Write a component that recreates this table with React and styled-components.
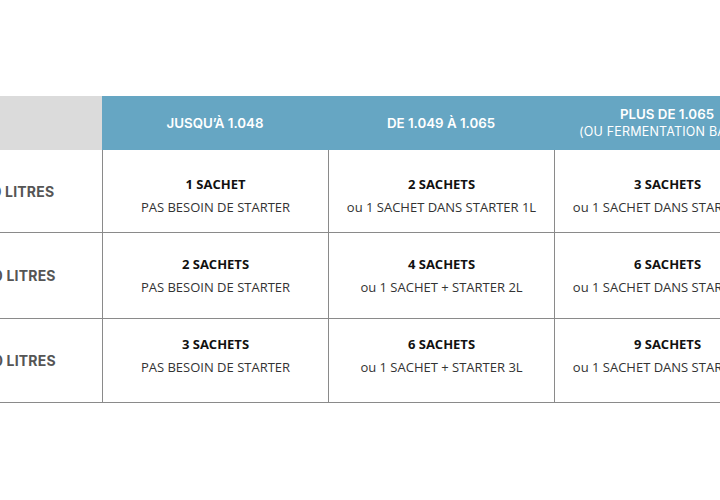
import React from "react";
import styled, { createGlobalStyle } from "styled-components";

const Global = createGlobalStyle`
  html, body { margin: 0; padding: 0; background: #fff; overflow: hidden; }
  body { width: 720px; height: 500px; }
`;

const Page = styled.div`
  width: 720px;
  height: 500px;
  overflow: hidden;
  padding-top: 96px;
  box-sizing: border-box;
`;

const Table = styled.div`
  display: grid;
  grid-template-columns: 170px repeat(3, 226px);
  grid-template-rows: 54px 83px 86px 84px;
  margin-left: -68px;
  width: 848px;
`;

const HeadCorner = styled.div`
  background: #dbdbdb;
`;

const HeadCell = styled.div`
  background: #66a6c3;
  color: #fff;
  font-family: Inter, Roboto, "Liberation Sans", sans-serif;
  font-size: 13.3px;
  font-weight: 600;
  display: flex;
  flex-direction: column;
  align-items: center;
  justify-content: center;
  text-align: center;
  line-height: 17px;
  white-space: nowrap;
`;

const HeadSub = styled.span`
  font-weight: 400;
  font-size: 12.5px;
  letter-spacing: 0.2px;
`;

const Label = styled.div`
  border-bottom: 1px solid #8a8a8a;
  display: flex;
  align-items: center;
  justify-content: center;
  font-family: Inter, Roboto, "Liberation Sans", sans-serif;
  font-weight: 700;
  font-size: 14px;
  color: #555;
  letter-spacing: 0.2px;
  padding-left: 6px;
`;

const Cell = styled.div`
  border-bottom: 1px solid #8a8a8a;
  border-left: 1px solid #8a8a8a;
  display: flex;
  flex-direction: column;
  align-items: center;
  justify-content: center;
  font-family: "Open Sans", "Liberation Sans", sans-serif;
  font-size: 13px;
  line-height: 23px;
  white-space: nowrap;
  padding-top: ${(p) => p.$top || 0}px;
  padding-bottom: ${(p) => p.$bottom || 0}px;
`;

const Title = styled.span`
  font-weight: 700;
  color: #111;
`;

const Sub = styled.span`
  color: #333;
`;

const heads = [
  { t: "JUSQU’À 1.048" },
  { t: "DE 1.049 À 1.065" },
  { t: "PLUS DE 1.065", s: "(OU FERMENTATION BASSE)" },
];

const rows = [
  {
    label: "10 LITRES",
    top: 10,
    bottom: 0,
    cells: [
      ["1 SACHET", "PAS BESOIN DE STARTER"],
      ["2 SACHETS", "ou 1 SACHET DANS STARTER 1L"],
      ["3 SACHETS", "ou 1 SACHET DANS STARTER 2L"],
    ],
  },
  {
    label: "20 LITRES",
    top: 0,
    bottom: 0,
    cells: [
      ["2 SACHETS", "PAS BESOIN DE STARTER"],
      ["4 SACHETS", "ou 1 SACHET + STARTER 2L"],
      ["6 SACHETS", "ou 1 SACHET DANS STARTER 3L"],
    ],
  },
  {
    label: "30 LITRES",
    top: 0,
    bottom: 10,
    cells: [
      ["3 SACHETS", "PAS BESOIN DE STARTER"],
      ["6 SACHETS", "ou 1 SACHET + STARTER 3L"],
      ["9 SACHETS", "ou 1 SACHET DANS STARTER 4L"],
    ],
  },
];

export default function App() {
  return (
    <Page>
      <Global />
      <Table>
        <HeadCorner />
        {heads.map((h, i) => (
          <HeadCell key={i}>
            <span>{h.t}</span>
            {h.s && <HeadSub>{h.s}</HeadSub>}
          </HeadCell>
        ))}
        {rows.map((r, ri) => (
          <React.Fragment key={ri}>
            <Label>{r.label}</Label>
            {r.cells.map((c, ci) => (
              <Cell key={ci} $top={r.top} $bottom={r.bottom}>
                <Title>{c[0]}</Title>
                <Sub>{c[1]}</Sub>
              </Cell>
            ))}
          </React.Fragment>
        ))}
      </Table>
    </Page>
  );
}
